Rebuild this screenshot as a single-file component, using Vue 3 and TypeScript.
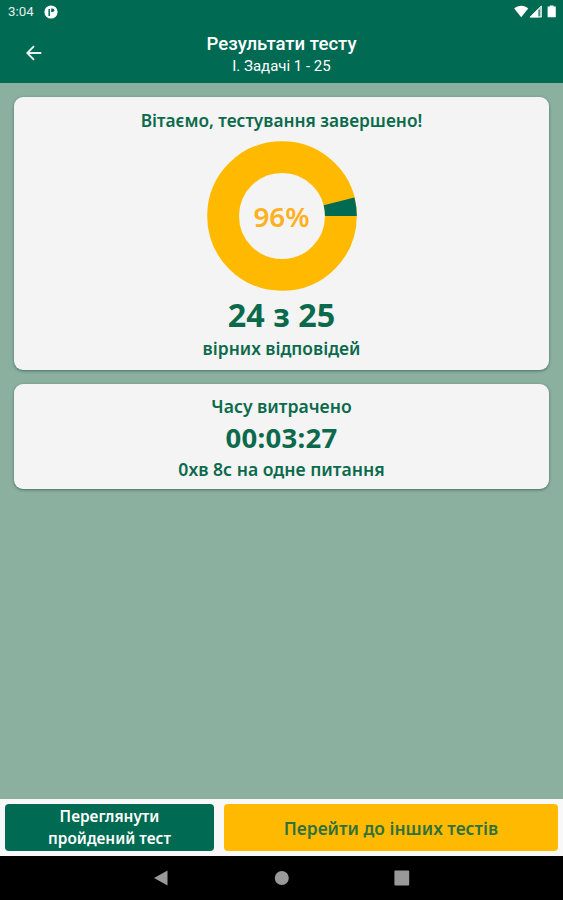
<script setup lang="ts">
interface TestResult {
  title: string
  subtitle: string
  correct: number
  total: number
  elapsed: string
  average: string
}

const result: TestResult = {
  title: 'Результати тесту',
  subtitle: 'I. Задачі 1 - 25',
  correct: 24,
  total: 25,
  elapsed: '00:03:27',
  average: '0хв 8с на одне питання',
}

const share = result.correct / result.total
const percent = `${Math.round(share * 100)}%`

function wedge(fraction: number): string {
  const angle = -2 * Math.PI * fraction
  const point = (r: number, a: number) =>
    `${(75 + r * Math.cos(a)).toFixed(2)} ${(75 + r * Math.sin(a)).toFixed(2)}`
  return `M${point(43, 0)}L${point(74.8, 0)}A74.8 74.8 0 0 0 ${point(74.8, angle)}L${point(43, angle)}A43 43 0 0 1 ${point(43, 0)}Z`
}
const missed = wedge(1 - share)
</script>

<template>
  <div class="screen">
    <div class="status">
      <span class="clock">3:04</span>
      <svg class="notice" viewBox="0 0 14 14">
        <circle cx="7" cy="7" r="6.6" fill="#fff" />
        <path d="M5.2 4V11" fill="none" stroke="#006a53" stroke-width="1.5" />
        <path d="M7.2 3.5h1.4a1.7 1.7 0 0 1 0 3.4H7.2Z" fill="#006a53" />
      </svg>
      <span class="spacer"></span>
      <svg class="signals" viewBox="0 0 44 14">
        <path d="M0.2 3.5C4.3-.2 10.3-.2 14.2 3.5L7.2 12.2Z" fill="#fff" />
        <path d="M15.6 12.3L27.6.3V12.3Z" fill="#a8cfc3" />
        <path d="M15.6 12.3L24 3.9V12.3Z" fill="#fff" />
        <path d="M16.4 12L27.3 1.1V12Z" fill="none" stroke="#fff" stroke-width=".8" />
        <path d="M25.2 4.8v6.3" stroke="#006a53" stroke-width=".9" />
        <path d="M33.6 1.5h2.2V.4h3.8v1.1h2.2v10.8h-8.2Z" fill="#fff" />
      </svg>
    </div>
    <header class="appbar">
      <button class="back" aria-label="Назад">
        <svg viewBox="0 0 16 16"><path d="M15.3 8H1.5M8 1.2L1.3 8L8 14.8" fill="none" stroke="#e8f4f0" stroke-width="1.9" /></svg>
      </button>
      <div class="heading">
        <h1>{{ result.title }}</h1>
        <p>{{ result.subtitle }}</p>
      </div>
    </header>
    <main>
      <section class="card summary">
        <p class="label congrats">Вітаємо, тестування завершено!</p>
        <svg class="donut" viewBox="0 0 150 150">
          <circle cx="75" cy="75" r="58.9" fill="none" stroke="#ffba00" stroke-width="31.8" />
          <path :d="missed" fill="#006a53" />
          <text x="74.5" y="86" text-anchor="middle">{{ percent }}</text>
        </svg>
        <p class="score">{{ result.correct }} з {{ result.total }}</p>
        <p class="label answers">вірних відповідей</p>
      </section>
      <section class="card timing">
        <p class="label spent">Часу витрачено</p>
        <p class="time">{{ result.elapsed }}</p>
        <p class="label average">{{ result.average }}</p>
      </section>
    </main>
    <footer class="actions">
      <button class="review">Переглянути<br />пройдений тест</button>
      <button class="next">Перейти до інших тестів</button>
    </footer>
    <nav class="system">
      <svg viewBox="0 0 16 16"><path d="M0 8L13.5.5V15.5Z" /></svg>
      <svg viewBox="0 0 16 16"><circle cx="7.8" cy="8" r="7" /></svg>
      <svg viewBox="0 0 16 16"><rect x=".4" y=".5" width="14.8" height="15" rx="1" /></svg>
    </nav>
  </div>
</template>

<style>
body { margin: 0; }
</style>

<style scoped>
.screen {
  display: flex;
  flex-direction: column;
  width: 563px;
  height: 900px;
  overflow: hidden;
  background: #8bb0a0;
  color: #0b6a4c;
  font-family: "Noto Sans", "Open Sans", sans-serif;
}
p, h1 { margin: 0; white-space: nowrap; }
button { border: 0; padding: 0; font: inherit; }
.status {
  display: flex;
  align-items: center;
  flex: none;
  height: 24px;
  padding: 0 7px 0 8px;
  background: #006a53;
}
.clock { font: 400 13.3px/26px Roboto, sans-serif; color: #e4f1ed; }
.notice { width: 14px; height: 14px; margin-left: 10px; }
.spacer { flex: 1; }
.signals { width: 44px; height: 14px; margin-right: -2px; }
.appbar {
  display: grid;
  grid-template-columns: 60px 1fr 60px;
  flex: none;
  height: 59px;
  background: #006a53;
  color: #fff;
  font-family: Roboto, sans-serif;
  text-align: center;
}
.back { display: flex; align-items: center; padding-left: 26px; height: 58px; background: none; }
.back svg { width: 16px; height: 16px; }
.heading { padding-top: 9px; }
h1 { font-size: 18.6px; line-height: 22px; font-weight: 500; }
.heading p { font-size: 15px; line-height: 23px; }
main { display: flex; flex-direction: column; gap: 14px; flex: 1; padding: 14px 14px 0; }
.card {
  display: flex;
  flex-direction: column;
  align-items: center;
  box-sizing: border-box;
  border-radius: 9px;
  background: #f4f4f4;
  box-shadow: 0 1px 3px rgba(0, 50, 35, .5);
}
.summary { height: 273px; padding-top: 12px; }
.timing { height: 105px; padding-top: 11px; }
.label { font-size: 17.4px; line-height: 24px; font-weight: 600; }
.congrats { font-size: 17.3px; }
.donut { width: 150px; height: 150px; margin-top: 8px; }
.donut text { font-size: 27.8px; font-weight: 600; fill: #ffb01e; }
.score { margin-top: 2px; font-size: 32.3px; line-height: 42px; font-weight: 700; }
.answers { margin-top: 1px; }
.spent, .average { font-size: 17.6px; }
.spent { margin-top: -1px; }
.time { margin-top: 1px; font-size: 27.5px; line-height: 38px; font-weight: 700; letter-spacing: .3px; }
.actions {
  display: flex;
  gap: 10px;
  flex: none;
  box-sizing: border-box;
  height: 57px;
  padding: 5px;
  background: #f8f8f8;
}
.actions button { border-radius: 4px; font-weight: 600; }
.review { width: 209px; background: #006a53; color: #fff; font-size: 15.4px; line-height: 22px; }
.next { flex: 1; background: #ffba00; color: #30713c; font-size: 17.4px; }
.system {
  display: flex;
  align-items: center;
  justify-content: center;
  gap: 104px;
  flex: none;
  height: 44px;
  background: #000;
}
.system svg { width: 16px; height: 16px; fill: #999; }
</style>
